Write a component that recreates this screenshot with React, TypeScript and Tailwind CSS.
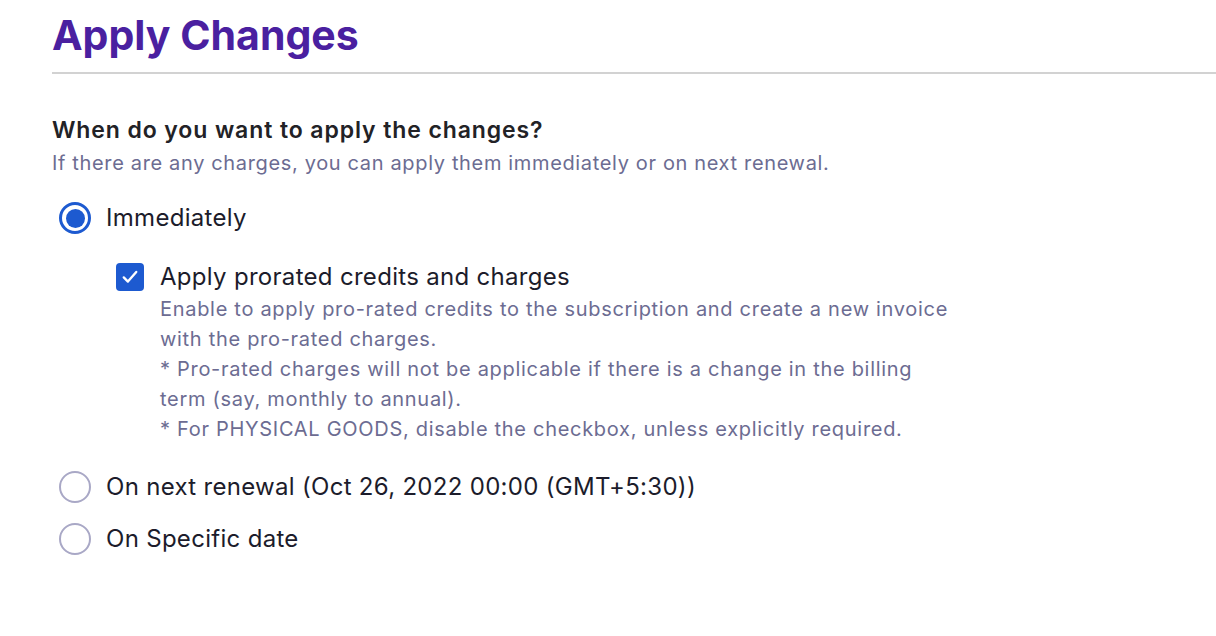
import { useState } from 'react'

type Choice = 'now' | 'renewal' | 'date'

function Radio({ checked, onClick }: { checked: boolean; onClick: () => void }) {
  return (
    <button
      className={
        checked
          ? 'flex h-[32px] w-[32px] shrink-0 items-center justify-center rounded-full border-[3px] border-[#1d5ad0] bg-white'
          : 'flex h-[32px] w-[32px] shrink-0 items-center justify-center rounded-full border-2 border-[#a9a8c6] bg-white'
      }
      onClick={onClick}
    >
      {checked && <span className="h-[19px] w-[19px] rounded-full bg-[#1d5ad0]" />}
    </button>
  )
}

export default function App() {
  const [choice, setChoice] = useState<Choice>('now')
  const [prorate, setProrate] = useState(true)

  return (
    <div className="min-h-screen bg-white pl-[52px] font-['Inter',sans-serif] antialiased">
      <h1 className="pt-[11px] text-[41px] leading-[48px] font-bold text-[#4a20a0]">Apply Changes</h1>
      <div className="mt-[13px] h-[2px] bg-[#d2d2d2]" />

      <h2 className="mt-[42px] text-[23px] leading-[28px] font-semibold tracking-[0.9px] text-[#222226]">
        When do you want to apply the changes?
      </h2>
      <p className="mt-[5px] text-[20px] leading-[28px] tracking-[0.65px] text-[#6c6c92]">
        If there are any charges, you can apply them immediately or on next renewal.
      </p>

      <div className="mt-[25px] flex items-center gap-[15px] pl-[7px]">
        <Radio checked={choice === 'now'} onClick={() => setChoice('now')} />
        <span className="text-[24px] leading-[32px] tracking-[0.3px] text-[#1c1c2b]">Immediately</span>
      </div>

      <div className="mt-[28px] flex gap-[16px] pl-[64px]">
        <button
          className={
            prorate
              ? 'mt-[1px] flex h-[28px] w-[28px] shrink-0 items-center justify-center rounded-[4px] bg-[#1d5ad0]'
              : 'mt-[1px] flex h-[28px] w-[28px] shrink-0 items-center justify-center rounded-[4px] border-2 border-[#a9a8c6] bg-white'
          }
          onClick={() => setProrate(!prorate)}
        >
          {prorate && (
            <svg width="20" height="20" viewBox="0 0 24 24" fill="none">
              <path d="M4.5 12.5l5 5L19.5 6" stroke="white" strokeWidth="2.8" strokeLinecap="round" strokeLinejoin="round" />
            </svg>
          )}
        </button>
        <div>
          <div className="text-[24px] leading-[30px] tracking-[0.3px] text-[#1c1c2b]">
            Apply prorated credits and charges
          </div>
          <div className="mt-[2px] text-[20px] leading-[30px] tracking-[0.7px] text-[#6c6c92]">
            <div>Enable to apply pro-rated credits to the subscription and create a new invoice</div>
            <div>with the pro-rated charges.</div>
            <div>* Pro-rated charges will not be applicable if there is a change in the billing</div>
            <div>term (say, monthly to annual).</div>
            <div>* For PHYSICAL GOODS, disable the checkbox, unless explicitly required.</div>
          </div>
        </div>
      </div>

      <div className="mt-[27px] flex items-center gap-[15px] pl-[7px]">
        <Radio checked={choice === 'renewal'} onClick={() => setChoice('renewal')} />
        <span className="text-[24px] leading-[32px] tracking-[0.3px] text-[#1c1c2b]">
          On next renewal (Oct 26, 2022 00:00 (GMT+5:30))
        </span>
      </div>
      <div className="mt-[20px] flex items-center gap-[15px] pl-[7px]">
        <Radio checked={choice === 'date'} onClick={() => setChoice('date')} />
        <span className="text-[24px] leading-[32px] tracking-[0.3px] text-[#1c1c2b]">On Specific date</span>
      </div>
    </div>
  )
}
